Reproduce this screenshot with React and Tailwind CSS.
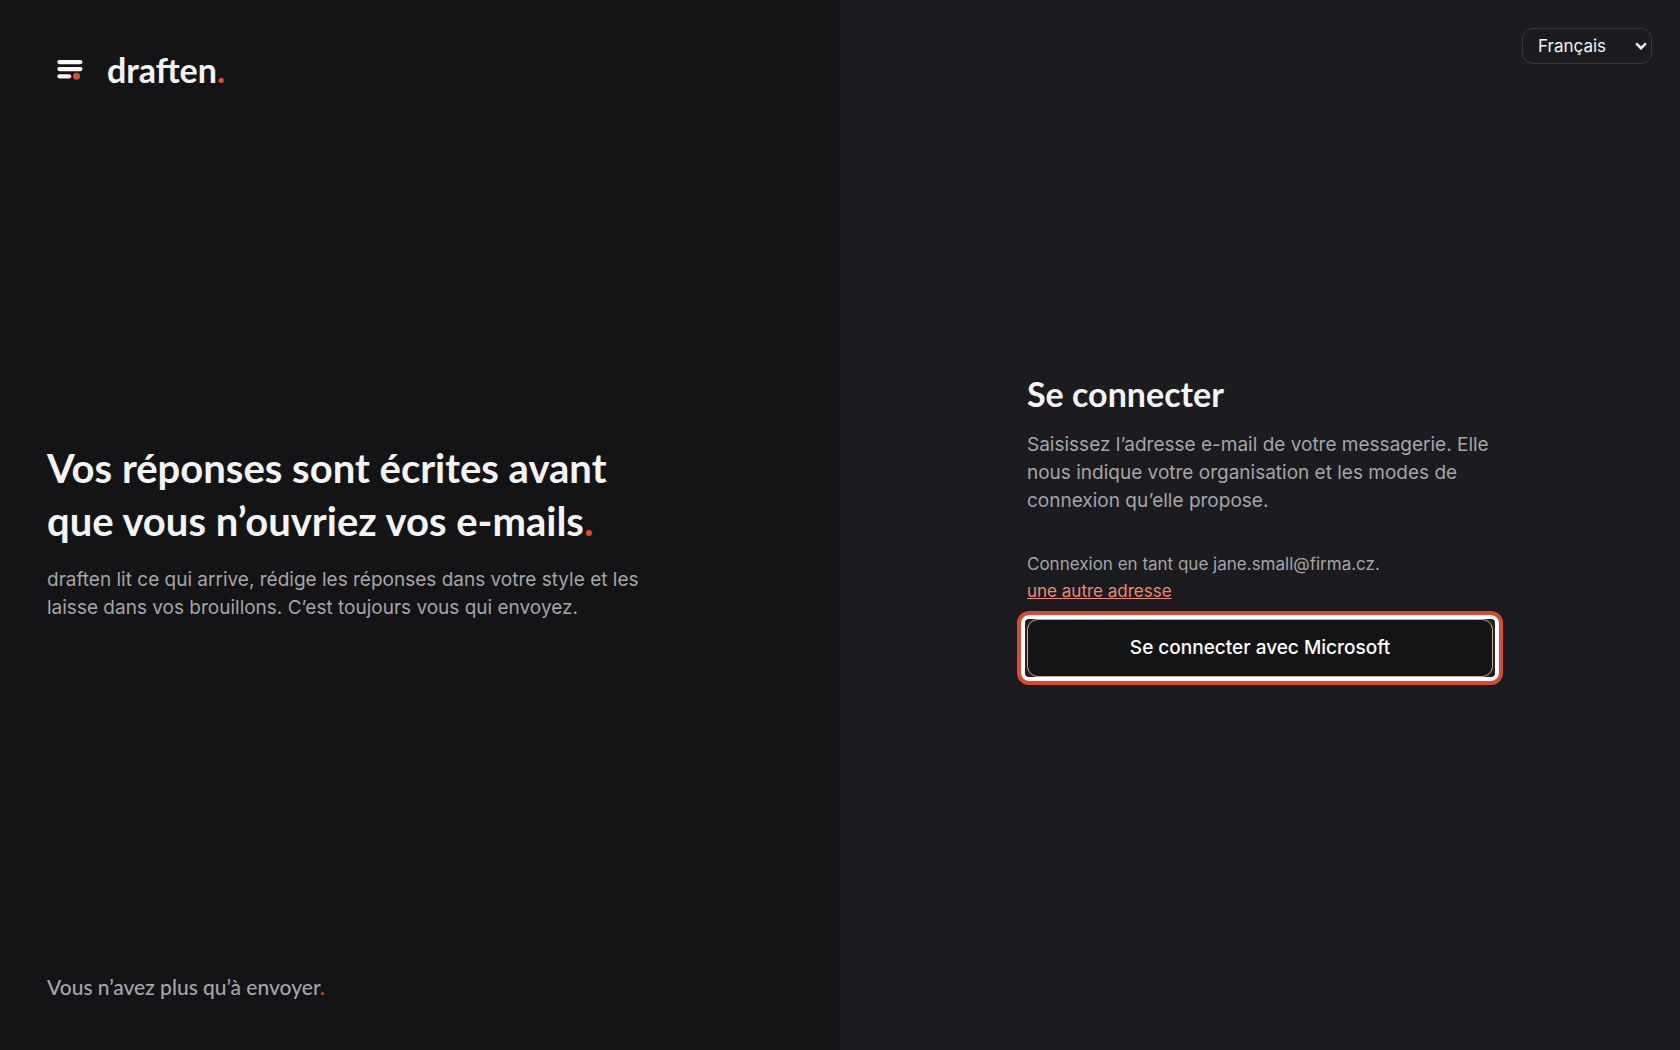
const languages = ['Français', 'English', 'Deutsch', 'Čeština']

const LogoMark = () => (
  <svg className="size-[46px]" viewBox="0 0 46 46" fill="none" aria-hidden="true">
    <rect x="10.3" y="13" width="25.2" height="4.2" rx="2.1" fill="#fbfaf7" />
    <rect x="10.3" y="20" width="25.2" height="4.2" rx="2.1" fill="#fbfaf7" />
    <rect x="10.3" y="27.2" width="14" height="4.2" rx="2.1" fill="#fbfaf7" />
    <circle cx="29.5" cy="29.3" r="3.5" fill="#e04a2f" />
  </svg>
)

const Dot = () => <span className="text-[#e04a2f]">.</span>

const BrandPanel = () => (
  <section className="flex flex-col justify-between bg-[#141416] p-[47px]">
    <div className="flex items-center gap-[14px]">
      <LogoMark />
      <span className="font-['Lato',sans-serif] text-[34px] leading-[46px] font-bold text-[#f4f4f5]">
        draften
        <Dot />
      </span>
    </div>

    <div className="max-w-[600px]">
      <h1 className="font-['Lato',sans-serif] text-[40px] leading-[53px] font-bold text-[#f4f4f5]">
        Vos réponses sont écrites avant
        <br />
        que vous n’ouvriez vos e-mails
        <Dot />
      </h1>
      <p className="mt-[18px] text-[19px] leading-[28px] text-[#a5a5ab]">
        draften lit ce qui arrive, rédige les réponses dans votre style et les laisse dans vos brouillons. C’est
        toujours vous qui envoyez.
      </p>
    </div>

    <p className="font-['Lato',sans-serif] text-[21px] leading-[32px] font-medium text-[#a5a5ab]">
      Vous n’avez plus qu’à envoyer
      <Dot />
    </p>
  </section>
)

const LanguageSelect = () => (
  <div className="absolute top-7 right-7">
    <select
      aria-label="Langue"
      className="h-9 w-[130px] appearance-none rounded-[11px] border border-[#38373c] bg-[#1c1b1f] pt-px pl-[15px] text-[17px] text-[#f4f4f5]"
    >
      {languages.map((language) => (
        <option key={language}>{language}</option>
      ))}
    </select>
    <svg
      className="pointer-events-none absolute top-[14px] right-[5px] h-2 w-3"
      viewBox="0 0 12 8"
      fill="none"
      aria-hidden="true"
    >
      <path d="M1.2 1.4 6 6.2l4.800-4.800" stroke="#ffffff" strokeWidth="2.600" />
    </svg>
  </div>
)

const SignInPanel = () => (
  <section className="relative flex flex-col items-center justify-center bg-[#1c1b1f] px-6">
    <LanguageSelect />

    <div className="w-full max-w-[466px]">
      <h2 className="font-['Lato',sans-serif] text-[34px] leading-[42px] font-bold text-[#f4f4f5]">Se connecter</h2>
      <p className="mt-4 text-[19px] leading-[28px] text-[#a5a5ab]">
        Saisissez l’adresse e-mail de votre messagerie. Elle nous indique votre organisation et les modes de connexion
        qu’elle propose.
      </p>

      <div className="mt-9 text-[17px] leading-[27px] text-[#a5a5ab]">
        <p>Connexion en tant que jane.small@firma.cz.</p>
        <a href="#" className="text-[#ef8a70] underline">
          une autre adresse
        </a>
      </div>

      <button
        type="button"
        className="relative mt-[14px] h-[58px] w-full rounded-[11px] border border-[#c4aaa6] bg-[#141416] text-[19px] font-medium text-white shadow-[0_0_0_2px_#3a1d1b]"
      >
        Se connecter avec Microsoft
        <span className="absolute -inset-x-[7px] -inset-y-[5px] rounded-[8px] border-4 border-white ring-4 ring-[#d94a30]" />
      </button>
    </div>
  </section>
)

const App = () => (
  <main className="grid min-h-screen grid-cols-2 font-['Inter',sans-serif]">
    <BrandPanel />
    <SignInPanel />
  </main>
)

export default App
